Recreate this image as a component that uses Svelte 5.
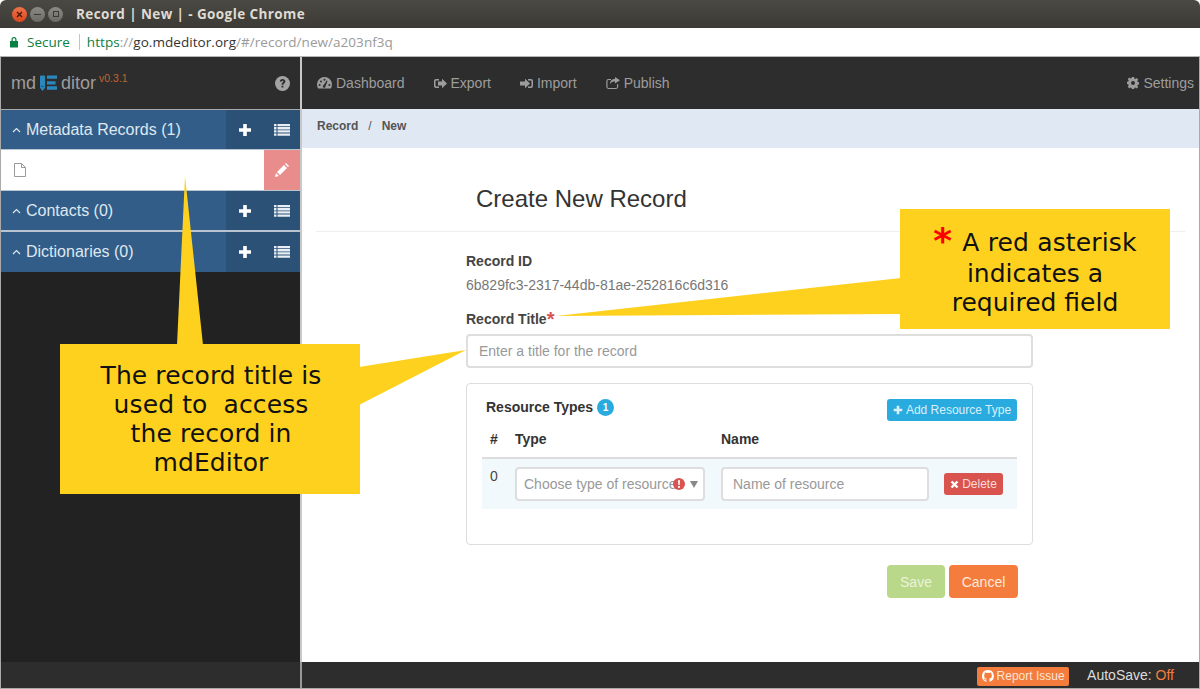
<script>
  const sections = [
    { name: 'Metadata Records (1)', hasItem: true },
    { name: 'Contacts (0)', hasItem: false },
    { name: 'Dictionaries (0)', hasItem: false }
  ];
</script>

{#snippet plus(size = 14)}
  <svg width={size} height={size} viewBox="0 0 14 14"><path d="M5.2 1h3.600v4.200H13v3.600H8.800V13H5.200V8.800H1V5.200h4.200z" fill="currentColor" /></svg>
{/snippet}

{#snippet list()}
  <svg width="16" height="14" viewBox="0 0 16 14">
    <path d="M0 1h2.500v2.300H0zM3.500 1H16v2.300H3.500zM0 4.100h2.500v2.300H0zM3.500 4.100H16v2.300H3.500zM0 7.300h2.500v2.300H0zM3.500 7.300H16v2.300H3.500zM0 10.500h2.500v2.300H0zM3.500 10.500H16v2.300H3.500z" fill="currentColor" />
  </svg>
{/snippet}

<div class="window">
  <header class="titlebar">
    <div class="lights">
      <span class="light close"><svg width="7" height="7" viewBox="0 0 7 7"><path d="M1 1l5 5M6 1L1 6" stroke="#4a1408" stroke-width="1.300" /></svg></span>
      <span class="light"><i class="dash"></i></span>
      <span class="light"><i class="box"></i></span>
    </div>
    <span class="wintitle">Record | New | - Google Chrome</span>
  </header>

  <div class="addressbar">
    <svg class="lock" width="10" height="12" viewBox="0 0 10 12"><path d="M2.500 5V3.500a2.500 2.500 0 0 1 5 0V5H9v6.500H1V5zM3.700 5h2.600V3.500a1.300 1.300 0 0 0-2.600 0z" fill="#0b8043" fill-rule="evenodd" /></svg>
    <span class="secure">Secure</span>
    <span class="addr-sep"></span>
    <span class="url"><span class="https">https</span><span class="dim">://</span><span class="host">go.mdeditor.org</span><span class="dim">/#/record/new/a203nf3q</span></span>
  </div>

  <div class="app">
    <aside class="sidebar">
      <div class="brand">
        <div class="logo">
          <span>md</span>
          <svg width="17" height="17" viewBox="0 0 18 17">
            <path d="M0 1.200A1.200 1.200 0 0 1 1.200 0h3A1.200 1.200 0 0 1 5.400 1.200V13L2.700 16.500 0 13z" fill="#2a88bd" />
            <path d="M1 11.500h3.400" stroke="#16506f" stroke-width=".8" />
            <path d="M7.400 0H18v3.500H7.400zM7.400 6H16.500v3.500H7.400zM7.400 11.500H18V15H7.400z" fill="#2a88bd" />
          </svg>
          <span>ditor</span>
          <sup>v0.3.1</sup>
        </div>
        <svg class="help" width="15" height="15" viewBox="0 0 15 15">
          <circle cx="7.500" cy="7.500" r="7.500" fill="#a3a3a3" />
          <path d="M4.800 5.400c.2-1.600 1.400-2.300 2.800-2.300 1.600 0 2.800 1 2.800 2.300 0 1.800-2 1.900-2 3.300H6.500c0-2.200 1.800-2.200 1.800-3.200 0-.4-.3-.7-.8-.7s-.8.300-1 .9zM6.500 9.700h1.900v1.900H6.500z" fill="#2d2d2d" />
        </svg>
      </div>

      {#each sections as s}
        <div class="section">
          <svg class="chev" width="9" height="6" viewBox="0 0 9 6"><path d="M1 5l3.500-3.500L8 5" fill="none" stroke="currentColor" stroke-width="1.200" /></svg>
          <span class="section-name">{s.name}</span>
          <span class="section-btn">{@render plus()}</span>
          <span class="section-btn list">{@render list()}</span>
        </div>
        {#if s.hasItem}
          <div class="item">
            <svg class="file" width="12" height="14" viewBox="0 0 12 14"><path d="M.5.500h7l4 4v9H.5zM7.500.500v4h4" fill="#fff" stroke="#9a9a9a" /></svg>
            <span class="edit">
              <svg width="14" height="14" viewBox="0 0 14 14"><path d="M0 14l1-4 3 3zM2 9l7-7 3 3-7 7zM10 1l1-1 3 3-1 1z" fill="#fff" /></svg>
            </span>
          </div>
        {/if}
      {/each}
    </aside>

    <div class="content">
      <nav class="navbar">
        <a>
          <svg width="15" height="12" viewBox="0 0 15 12">
            <path d="M7.500 0A7.500 7.500 0 0 0 1 11.200c.1.200.3.300.5.300h12c.2 0 .4-.1.500-.3A7.500 7.500 0 0 0 7.500 0z" fill="currentColor" />
            <g fill="#2d2d2d">
              <circle cx="2.600" cy="8" r="1" /><circle cx="4" cy="4.400" r="1" /><circle cx="7.500" cy="2.800" r="1" /><circle cx="12.400" cy="8" r="1" />
              <path d="M6.300 8.500L9.800 3.600l.8.400-2.200 5.400a1.300 1.300 0 1 1-2.100-.9z" />
            </g>
          </svg>
          Dashboard
        </a>
        <a>
          <svg width="13" height="11" viewBox="0 0 13 11"><path d="M5 1H2a2 2 0 0 0-2 2v5a2 2 0 0 0 2 2h3V8.500H2.500a1 1 0 0 1-1-1v-4a1 1 0 0 1 1-1H5zM8 .8l5 4.700-5 4.700V7.500H4v-4h4z" fill="currentColor" /></svg>
          Export
        </a>
        <a>
          <svg width="13" height="11" viewBox="0 0 13 11"><path d="M8 1h3a2 2 0 0 1 2 2v5a2 2 0 0 1-2 2H8V8.500h2.500a1 1 0 0 0 1-1v-4a1 1 0 0 0-1-1H8zM5 .8l5 4.700-5 4.700V7.500H0v-4h5z" fill="currentColor" /></svg>
          Import
        </a>
        <a>
          <svg width="14" height="12" viewBox="0 0 14 12"><path d="M11 7.500V10a1 1 0 0 1-1 1H2.500a1 1 0 0 1-1-1V4a1 1 0 0 1 1-1H5V2H2.500A2.300 2.300 0 0 0 .3 4.300v5.500A2.300 2.300 0 0 0 2.500 12h7.500a2.300 2.300 0 0 0 2.200-2.200V7zM9 0v2C6 2 4 3.500 4 7c1-2 3-2.500 5-2.500v2l5-3.200z" fill="currentColor" /></svg>
          Publish
        </a>
        <a class="settings">
          <svg width="12" height="12" viewBox="0 0 12 12"><path d="M4.900 0h2.200l.3 1.600 1 .4 1.300-.9 1.500 1.500-.9 1.300.4 1 1.500.3v2.200l-1.500.3-.4 1 .9 1.300-1.500 1.500-1.300-.9-1 .4-.3 1.500H4.900l-.3-1.500-1-.4-1.300.9L.8 9.500l.9-1.300-.4-1L0 6.900V4.700l1.300-.3.4-1-.9-1.300L2.300.6l1.300.9 1-.4zM6 4a2 2 0 1 0 0 4 2 2 0 0 0 0-4z" fill="currentColor" fill-rule="evenodd" /></svg>
          Settings
        </a>
      </nav>

      <div class="crumbs"><b>Record</b><span>/</span><b>New</b></div>

      <main class="page">
        <h2>Create New Record</h2>
        <hr />
        <form class="form">
          <label class="lab" for="rid">Record ID</label>
          <p id="rid" class="static">6b829fc3-2317-44db-81ae-252816c6d316</p>
          <label class="lab title-lab" for="rtitle">Record Title<span class="req">*</span></label>
          <input id="rtitle" class="field" placeholder="Enter a title for the record" />

          <section class="panel">
            <div class="panel-head">
              <span class="panel-title">Resource Types <span class="badge">1</span></span>
              <button type="button" class="btn-add">{@render plus(10)} Add Resource Type</button>
            </div>
            <div class="thead"><span class="c0">#</span><span class="c1">Type</span><span class="c2">Name</span></div>
            <div class="trow">
              <span class="c0 idx">0</span>
              <span class="c1">
                <span class="select">
                  Choose type of resource
                  <svg class="warn" width="12" height="12" viewBox="0 0 12 12"><circle cx="6" cy="6" r="6" fill="#d9534f" /><path d="M5 2.300h2L6.700 7H5.300zM5 8h2v1.800H5z" fill="#fff" /></svg>
                  <i class="caret"></i>
                </span>
              </span>
              <span class="c2"><input class="field small" placeholder="Name of resource" /></span>
              <button type="button" class="btn-del">
                <svg width="9" height="9" viewBox="0 0 9 9"><path d="M1.500 1.500l6 6M7.500 1.500l-6 6" stroke="#fff" stroke-width="2.400" /></svg>
                Delete
              </button>
            </div>
          </section>

          <div class="actions">
            <button type="button" class="btn save">Save</button>
            <button type="button" class="btn cancel">Cancel</button>
          </div>
        </form>
      </main>
    </div>
  </div>

  <footer class="footer">
    <span class="footer-side"></span>
    <span class="report">
      <svg width="12" height="12" viewBox="0 0 16 16"><path d="M8 0a8 8 0 0 0-2.500 15.600c.4.100.5-.2.500-.4v-1.400c-2.200.5-2.700-1-2.700-1-.4-.9-.9-1.200-.9-1.200-.7-.5.100-.5.100-.5.800.1 1.200.8 1.200.8.700 1.200 1.900.9 2.300.7.100-.5.300-.9.500-1.100-1.800-.2-3.600-.9-3.600-4 0-.9.300-1.600.8-2.100-.1-.2-.4-1 .1-2.100 0 0 .7-.2 2.200.8a7.500 7.500 0 0 1 4 0c1.500-1 2.200-.8 2.200-.8.400 1.100.2 1.900.1 2.100.5.600.8 1.300.8 2.100 0 3.100-1.900 3.700-3.700 3.900.3.300.6.800.6 1.500v2.200c0 .2.100.5.600.4A8 8 0 0 0 8 0z" fill="#fff" /></svg>
      Report Issue
    </span>
    <span class="autosave">AutoSave: <em>Off</em></span>
  </footer>

  <!-- tutorial callouts drawn over the app -->
  <svg class="tails" width="1200" height="689" viewBox="0 0 1200 689">
    <path d="M185 176L177 345H203zM466 350L359 367V405zM556 316L901 278V314z" fill="#ffd11f" />
  </svg>
  <div class="callout left">The record title is<br />used to &nbsp;access<br />the record in<br />mdEditor</div>
  <div class="callout right"><div class="first"><span class="star">*</span>A red asterisk</div>indicates a<br />required field</div>
</div>

<style>
  :global(body) {
    margin: 0;
    background: #fff;
  }
  .window {
    position: relative;
    width: 1200px;
    height: 689px;
    overflow: hidden;
    display: flex;
    flex-direction: column;
    font-family: "Liberation Sans", Arial, sans-serif;
    font-size: 14px;
    color: #333;
  }
  .titlebar {
    height: 28px;
    flex: none;
    display: flex;
    align-items: center;
    background: linear-gradient(#4a4943, #3b3a36);
    border-radius: 6px 6px 0 0;
    box-sizing: border-box;
    padding-left: 12px;
  }
  .lights {
    display: flex;
    gap: 3px;
  }
  .light {
    width: 15px;
    height: 15px;
    border-radius: 50%;
    background: linear-gradient(#8b8a84, #6b6a65);
    display: flex;
    align-items: center;
    justify-content: center;
  }
  .light.close {
    background: linear-gradient(#f0734a, #d8481e);
  }
  .dash {
    width: 7px;
    height: 1px;
    background: #3b3a36;
  }
  .box {
    width: 6px;
    height: 6px;
    border: 1px solid #3b3a36;
    box-sizing: border-box;
  }
  .wintitle {
    margin-left: 13px;
    font-family: "Open Sans", sans-serif;
    font-weight: 700;
    font-size: 13.500px;
    letter-spacing: 0.4px;
    color: #dfdbd2;
  }
  .addressbar {
    height: 29px;
    flex: none;
    box-sizing: border-box;
    display: flex;
    align-items: center;
    background: #fff;
    border-bottom: 1px solid #b5b5b5;
    padding-left: 9px;
    font-family: "Open Sans", sans-serif;
    font-size: 13.500px;
  }
  .secure {
    margin-left: 8px;
    color: #0b8043;
  }
  .addr-sep {
    width: 1px;
    height: 16px;
    background: #c4c4c4;
    margin: 0 7px 0 9px;
  }
  .url {
    letter-spacing: 0.05px;
  }
  .https {
    color: #0b8043;
  }
  .dim {
    color: #9a9a9a;
  }
  .host {
    color: #333;
  }
  .app {
    flex: 1;
    display: flex;
    min-height: 0;
    border-left: 1px solid #aaa;
    border-right: 1px solid #aaa;
  }
  .sidebar {
    width: 299px;
    flex: none;
    background: #222;
    border-right: 2px solid #c8c8c8;
  }
  .brand {
    height: 53px;
    box-sizing: border-box;
    background: #2d2d2d;
    border-bottom: 1px solid #aaa;
    display: flex;
    align-items: center;
    justify-content: space-between;
    padding: 0 10px;
  }
  .logo {
    display: flex;
    align-items: center;
    gap: 4px;
    color: #9d9d9d;
    font-size: 18px;
  }
  .logo sup {
    font-size: 10.500px;
    color: #c0652f;
    margin: -10px 0 0 -1px;
  }
  .section {
    height: 40px;
    box-sizing: border-box;
    display: flex;
    align-items: center;
    background: #325d88;
    color: #dfe8f0;
    font-size: 16px;
    border-bottom: 1px solid #b8c4d0;
  }
  .section:last-of-type {
    height: 41px;
    border-top: 1px solid #b8c4d0;
    border-bottom: 0;
  }
  .chev {
    margin: 0 5px 0 11px;
  }
  .section-name {
    flex: 1;
  }
  .section-btn {
    width: 37px;
    height: 100%;
    background: #2b5177;
    color: #fff;
    display: flex;
    align-items: center;
    justify-content: center;
  }
  .section-btn.list {
    color: #e8eef4;
  }
  .item {
    height: 41px;
    box-sizing: border-box;
    background: #fff;
    display: flex;
    align-items: center;
    justify-content: space-between;
    border-bottom: 1px solid #b8c4d0;
  }
  .file {
    margin-left: 13px;
  }
  .edit {
    width: 36px;
    height: 100%;
    background: #e88d8b;
    display: flex;
    align-items: center;
    justify-content: center;
  }
  .content {
    flex: 1;
    min-width: 0;
    display: flex;
    flex-direction: column;
  }
  .navbar {
    height: 52px;
    flex: none;
    box-sizing: border-box;
    background: #2d2d2d;
    display: flex;
    align-items: center;
    gap: 29px;
    padding: 0 5px 0 15px;
    color: #9d9d9d;
  }
  .navbar a {
    display: flex;
    align-items: center;
    gap: 4px;
  }
  .settings {
    margin-left: auto;
  }
  .crumbs {
    height: 39px;
    flex: none;
    box-sizing: border-box;
    background: #dfe8f3;
    display: flex;
    align-items: center;
    gap: 10px;
    padding: 0 0 6px 15px;
    font-size: 12px;
    color: #555;
  }
  .page {
    flex: 1;
    background: #fff;
    padding: 0 14px;
  }
  h2 {
    margin: 37px 0 0 160px;
    font-size: 24px;
    font-weight: 400;
    line-height: 28px;
    color: #333;
  }
  hr {
    border: 0;
    border-top: 1px solid #eee;
    margin: 18px 0 0;
  }
  .form {
    width: 567px;
    margin-left: 150px;
    padding-top: 21px;
    display: flex;
    flex-direction: column;
  }
  .lab {
    font-weight: 700;
    line-height: 17px;
    color: #444;
  }
  .static {
    margin: 5px 0 0;
    line-height: 20px;
    color: #777;
  }
  .title-lab {
    margin-top: 15px;
    line-height: 18px;
  }
  .req {
    color: #d9534f;
    font-size: 20px;
    line-height: 0;
    vertical-align: -2px;
  }
  .field {
    box-sizing: border-box;
    width: 100%;
    height: 34px;
    margin-top: 6px;
    padding: 0 11px;
    border: 2px solid #dedede;
    border-radius: 4px;
    font: inherit;
    outline: none;
    background: #fff;
  }
  .field::placeholder {
    color: #999;
    opacity: 1;
  }
  .field.small {
    width: 208px;
    margin: 0;
    padding: 0 10px;
  }
  .panel {
    margin-top: 15px;
    height: 162px;
    box-sizing: border-box;
    border: 1px solid #ddd;
    border-radius: 4px;
    padding: 15px 15px 0;
  }
  .panel-head {
    height: 22px;
    display: flex;
    align-items: center;
    justify-content: space-between;
    padding-left: 4px;
  }
  .panel-title {
    font-size: 14px;
    font-weight: 700;
    color: #333;
    display: flex;
    align-items: center;
    gap: 4px;
    margin-top: -6px;
  }
  .badge {
    width: 17px;
    height: 17px;
    border-radius: 50%;
    background: #29abe0;
    color: #fff;
    font-size: 10px;
    display: flex;
    align-items: center;
    justify-content: center;
  }
  .btn-add {
    height: 22px;
    width: 130px;
    padding: 0;
    border: 0;
    border-radius: 3px;
    background: #29abe0;
    color: #d9f0fa;
    font: 12px "Liberation Sans", sans-serif;
    display: flex;
    align-items: center;
    justify-content: center;
    gap: 3px;
  }
  .thead {
    display: flex;
    height: 38px;
    align-items: center;
    box-sizing: border-box;
    border-bottom: 2px solid #ddd;
    font-weight: 700;
    color: #333;
  }
  .c0 {
    width: 33px;
    padding-left: 8px;
    box-sizing: border-box;
  }
  .c1 {
    width: 206px;
  }
  .c2 {
    width: 223px;
  }
  .trow {
    display: flex;
    align-items: center;
    height: 50px;
    background: #f2f9fd;
  }
  .idx {
    align-self: flex-start;
    padding-top: 9px;
    color: #444;
  }
  .select {
    width: 190px;
    height: 34px;
    box-sizing: border-box;
    border: 2px solid #dedede;
    border-radius: 4px;
    background: #fff;
    color: #999;
    display: flex;
    align-items: center;
    padding-left: 7px;
    white-space: nowrap;
    position: relative;
  }
  .warn {
    position: absolute;
    left: 156px;
    top: 9px;
  }
  .caret {
    position: absolute;
    right: 5px;
    top: 12px;
    border-left: 4px solid transparent;
    border-right: 4px solid transparent;
    border-top: 7px solid #888;
  }
  .btn-del {
    width: 59px;
    height: 22px;
    padding: 0;
    border: 0;
    border-radius: 3px;
    background: #d9534f;
    color: #f7dcdb;
    font: 12px "Liberation Sans", sans-serif;
    display: flex;
    align-items: center;
    justify-content: center;
    gap: 3px;
  }
  .actions {
    display: flex;
    justify-content: flex-end;
    gap: 4px;
    margin-top: 20px;
    padding-right: 15px;
  }
  .btn {
    height: 33px;
    border: 0;
    border-radius: 4px;
    font: 14px "Liberation Sans", sans-serif;
    padding: 0;
  }
  .save {
    width: 58px;
    background: #b9d88a;
    color: #e9f3da;
  }
  .cancel {
    width: 69px;
    background: #f47c3c;
    color: #fde9dd;
  }
  .footer {
    height: 27px;
    flex: none;
    box-sizing: border-box;
    background: #2d2d2d;
    border-left: 1px solid #aaa;
    border-right: 1px solid #aaa;
    border-bottom: 1px solid #aaa;
    display: flex;
    align-items: center;
    justify-content: flex-end;
    padding-right: 25px;
  }
  .footer-side {
    width: 299px;
    height: 100%;
    border-right: 2px solid #999;
    margin-right: auto;
  }
  .report {
    height: 19px;
    width: 92px;
    border-radius: 2px;
    background: #f47c3c;
    color: #fde4d5;
    font-size: 12px;
    display: flex;
    align-items: center;
    justify-content: center;
    gap: 3px;
    margin-top: 2px;
  }
  .autosave {
    margin-left: 18px;
    color: #ddd;
  }
  .autosave em {
    font-style: normal;
    color: #f47c3c;
  }
  .tails {
    position: absolute;
    left: 0;
    top: 0;
    pointer-events: none;
  }
  .callout {
    position: absolute;
    box-sizing: border-box;
    background: #ffd11f;
    color: #111;
    font-family: "DejaVu Sans", sans-serif;
    font-size: 25px;
    line-height: 29px;
    text-align: center;
  }
  .callout.left {
    left: 60px;
    top: 344px;
    width: 300px;
    height: 150px;
    padding: 17px 0 0 2px;
    letter-spacing: 0.1px;
  }
  .callout.right {
    left: 900px;
    top: 209px;
    width: 270px;
    height: 120px;
    padding-top: 19px;
  }
  .first {
    margin-bottom: 2px;
    letter-spacing: 0.15px;
  }
  .star {
    color: #f00;
    font-weight: 700;
    font-size: 36px;
    line-height: 0;
    vertical-align: -2px;
    margin-right: 10px;
  }
</style>
